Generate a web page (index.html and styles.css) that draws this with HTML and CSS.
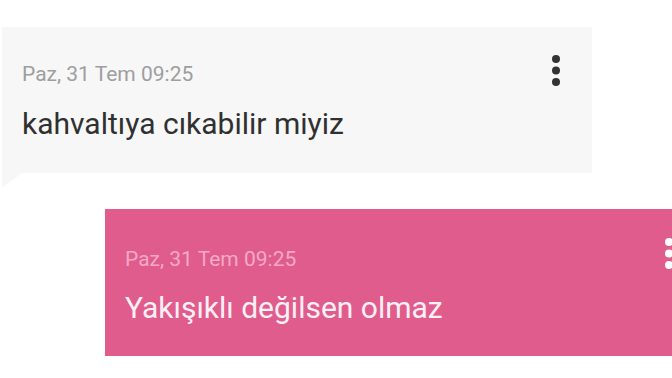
FILE: index.html
```html
<!DOCTYPE html>
<html lang="tr">
<head>
    <meta charset="UTF-8">
    <meta name="viewport" content="width=device-width, initial-scale=1.0">
    <title>Mesajlar</title>
    <link rel="stylesheet" href="styles.css">
</head>
<body>
    <div class="thread">
        <!-- incoming message -->
        <div class="bubble incoming">
            <div class="msg-body">
                <div class="msg-date">Paz, 31 Tem 09:25</div>
                <div class="msg-text">kahvaltıya cıkabilir miyiz</div>
            </div>
            <svg class="menu" width="8" height="31" viewBox="0 0 8 31">
                <circle cx="4" cy="4" r="4"/>
                <circle cx="4" cy="15.5" r="4"/>
                <circle cx="4" cy="27" r="4"/>
            </svg>
        </div>

        <!-- outgoing message -->
        <div class="bubble outgoing">
            <div class="msg-body">
                <div class="msg-date">Paz, 31 Tem 09:25</div>
                <div class="msg-text">Yakışıklı değilsen olmaz</div>
            </div>
            <svg class="menu" width="8" height="31" viewBox="0 0 8 31">
                <circle cx="4" cy="4" r="4"/>
                <circle cx="4" cy="15.5" r="4"/>
                <circle cx="4" cy="27" r="4"/>
            </svg>
        </div>
    </div>
</body>
</html>
```

FILE: styles.css
```css
body {
    margin: 0;
    padding: 0;
    background-color: #ffffff;
    font-family: Roboto, "Noto Sans", sans-serif;
    overflow: hidden;
}

.thread {
    display: flex;
    flex-direction: column;
    padding-top: 27px;
}

.bubble {
    position: relative;
    display: flex;
    align-items: flex-start;
    flex-shrink: 0;
    box-sizing: border-box;
}

.msg-body {
    flex: 1;
    padding-left: 20px;
}

.msg-date {
    font-size: 21px;
    line-height: 22px;
}

.msg-text {
    font-size: 30px;
    line-height: 34px;
}

.menu {
    margin-top: 28px;
    margin-right: 32px;
}

.incoming {
    width: 590px;
    height: 146px;
    margin-left: 2px;
    background-color: #f7f7f7;
}

.incoming .msg-body {
    padding-top: 36px;
}

.incoming .msg-date {
    color: #9e9e9e;
}

.incoming .msg-text {
    margin-top: 22px;
    color: #303030;
}

.incoming .menu {
    fill: #333333;
}

/* little tail under the incoming bubble */
.incoming::after {
    content: "";
    position: absolute;
    left: 0;
    top: 100%;
    border-top: 15px solid #f7f7f7;
    border-right: 20px solid transparent;
}

.outgoing {
    width: 600px;
    height: 147px;
    margin-top: 36px;
    margin-left: 105px;
    background-color: #e05c8d;
}

.outgoing .msg-body {
    padding-top: 39px;
}

.outgoing .msg-date {
    color: #f5a9c6;
}

.outgoing .msg-text {
    margin-top: 21px;
    color: #fdf0f5;
}

.outgoing .menu {
    fill: #ffffff;
    margin-top: 29px;
}
```
